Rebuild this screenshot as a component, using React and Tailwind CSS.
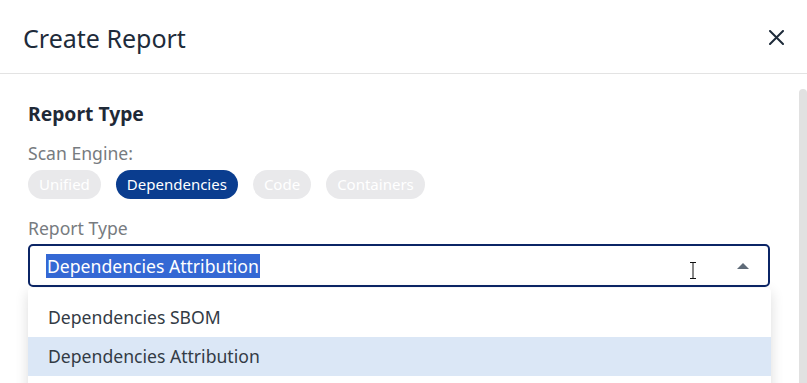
const engines = [
  { name: "Unified", active: false },
  { name: "Dependencies", active: true },
  { name: "Code", active: false },
  { name: "Containers", active: false },
]

const options = ["Dependencies SBOM", "Dependencies Attribution"]

export default function App() {
  return (
    <div className="w-[807px] h-[383px] overflow-hidden bg-white font-['Noto_Sans',sans-serif]">
      {/* Header */}
      <div className="h-[74px] flex items-center justify-between pl-[23px] pr-[23px] border-b border-[#e3e3e3]">
        <h2 className="text-[25px] leading-8 text-[#1e2b3a] pt-[3px]">Create Report</h2>
        <svg width="15" height="15" viewBox="0 0 15 15" className="mt-[1px]">
          <path d="M1 1L14 14M14 1L1 14" stroke="#1e2b3a" strokeWidth="2" strokeLinecap="round" />
        </svg>
      </div>

      {/* Body */}
      <div className="flex">
        <div className="flex-1 pl-7 pr-[29px] pt-[28px]">
          <h3 className="text-[19.3px] leading-6 font-bold text-[#1f2937]">Report Type</h3>
          <p className="mt-4 text-[17.6px] leading-[22px] text-[#777b80]">Scan Engine:</p>
          <div className="mt-[6px] flex gap-[15px]">
            {engines.map((e) => (
              <span
                key={e.name}
                className={`h-[29px] px-[11px] rounded-full flex items-center text-[15px] ${
                  e.active ? "bg-[#0a3d8f] text-white" : "bg-[#e9e9eb] text-white"
                }`}
              >
                {e.name}
              </span>
            ))}
          </div>

          <p className="mt-[18px] text-[17.6px] leading-[22px] text-[#777b80]">Report Type</p>
          <div className="relative mt-[5px]">
            <div className="h-[43px] border-2 border-[#0b2566] rounded-[5px] flex items-center pl-4 pr-[19px]">
              <span className="bg-[#3468d4] text-white text-[17.6px] leading-6 px-[1px]">Dependencies Attribution</span>
              <div className="flex-1" />
              <svg width="8" height="17" viewBox="0 0 8 17" className="mt-[10px] mr-[40px]">
                <path d="M1 0.5h6M4 0.5v16M1 16.5h6" stroke="#111" strokeWidth="1" fill="none" />
              </svg>
              <svg width="12" height="6" viewBox="0 0 12 6">
                <path d="M0 6L6 0L12 6Z" fill="#5f6b78" />
              </svg>
            </div>

            {/* Dropdown */}
            <div className="absolute left-0 right-[-1px] top-[44px] bg-white rounded-t-[4px] shadow-[0_4px_14px_rgba(0,0,0,0.14)] pt-[10px] pb-10">
              {options.map((o, i) => (
                <div
                  key={o}
                  className={`h-[39px] flex items-center px-5 text-[17.6px] text-[#333b45] ${
                    i === 1 ? "bg-[#dbe7f6]" : ""
                  }`}
                >
                  {o}
                </div>
              ))}
            </div>
          </div>
        </div>

        {/* Scrollbar */}
        <div className="w-2 mt-[15px] h-[320px] bg-[#e1e1e1] rounded-t-[4px]" />
      </div>
    </div>
  )
}
